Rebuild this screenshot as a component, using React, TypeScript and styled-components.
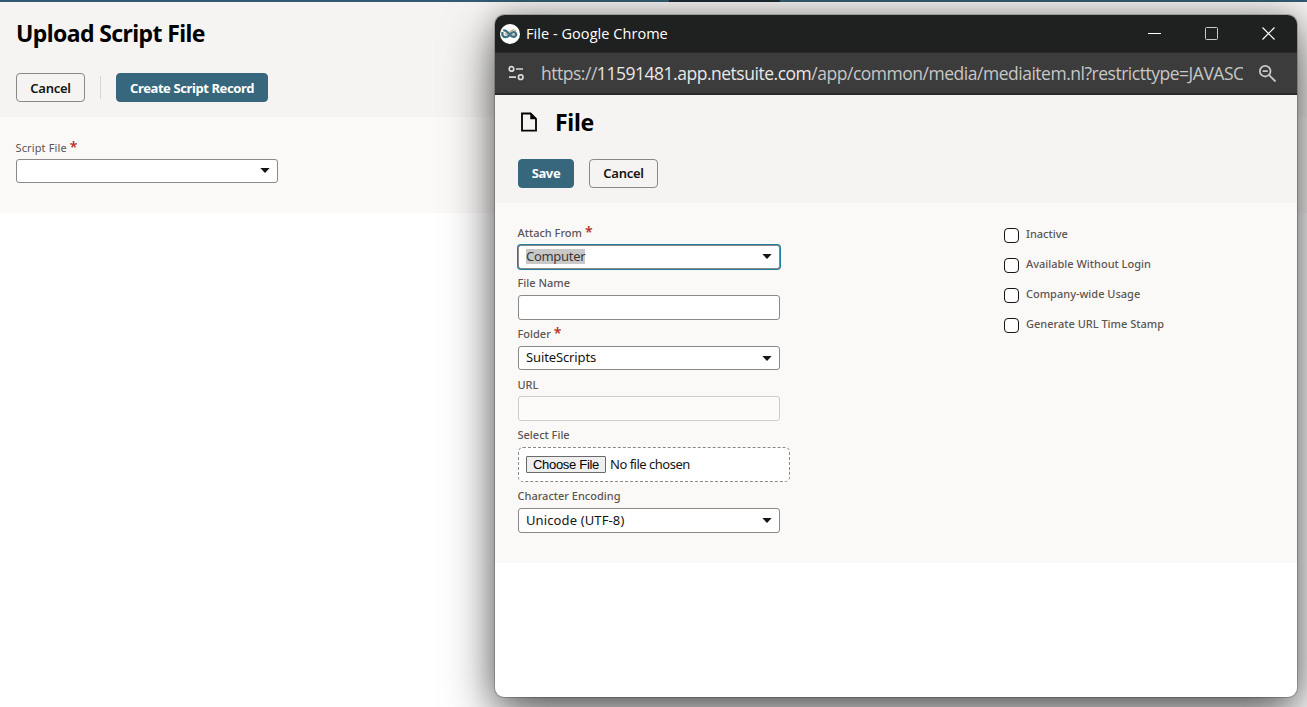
import React from "react";
import styled, { createGlobalStyle, css } from "styled-components";

const GlobalStyle = createGlobalStyle`
  *, *::before, *::after { box-sizing: border-box; }
  html, body { margin: 0; height: 100%; overflow: hidden; background: #fff; }
  body { font-family: "Noto Sans", "Open Sans", sans-serif; color: #161513; }
`;

const Page = styled.div`
  position: relative;
  height: 707px;
  overflow: hidden;
`;

const TopStrip = styled.div`
  height: 2px;
  padding-left: 669px;
  background: #325c72;
`;

const ActiveTab = styled.div`
  width: 111px;
  height: 2px;
  background: #1c2b33;
`;

const PageHeader = styled.header`
  height: 115px;
  padding: 14px 16px 0;
  background: #f5f4f2;
`;

const PageTitle = styled.h1<{ $spacing: number }>`
  margin: 0;
  font-size: 23px;
  line-height: 34px;
  font-weight: 700;
  color: #000;
  white-space: nowrap;
  letter-spacing: ${(p) => p.$spacing}px;
`;

const ButtonRow = styled.div<{ $top: number }>`
  display: flex;
  align-items: center;
  gap: 15px;
  margin-top: ${(p) => p.$top}px;
`;

const Button = styled.button<{ $width: number; $primary?: boolean; $lineHeight?: number }>`
  width: ${(p) => p.$width}px;
  height: 29px;
  padding: 0;
  border: 1px solid #8b8886;
  border-radius: 4px;
  background: transparent;
  color: #161513;
  font: 600 13px "Noto Sans", sans-serif;
  line-height: ${(p) => p.$lineHeight ?? 27}px;
  letter-spacing: -0.25px;
  white-space: nowrap;
  ${(p) =>
    p.$primary &&
    css`
      border-color: #36677d;
      background: #36677d;
      color: #fff;
      font-weight: 700;
      letter-spacing: -0.4px;
    `}
`;

const ButtonText = styled.span<{ $drop?: number }>`
  display: block;
  padding-top: ${(p) => p.$drop ?? 0}px;
`;

const Divider = styled.span`
  width: 1px;
  height: 23px;
  background: #d8d6d3;
`;

const PageForm = styled.section`
  height: 96px;
  padding: 22px 16px 0;
  background: #fbf9f8;
`;

const Field = styled.div<{ $gap?: number }>`
  display: flex;
  flex-direction: column;
  margin-bottom: ${(p) => p.$gap ?? 0}px;
`;

const FieldLabel = styled.label<{ $height?: number; $line?: number; $spacing?: number; $medium?: boolean }>`
  display: flex;
  height: ${(p) => p.$height ?? 20}px;
  margin-left: -0.5px;
  font-size: 11px;
  line-height: ${(p) => p.$line ?? 18}px;
  font-weight: ${(p) => (p.$medium ? 500 : 400)};
  color: #5b5652;
  white-space: nowrap;
  letter-spacing: ${(p) => p.$spacing ?? 0}px;
`;

const Required = styled.span<{ $line?: number }>`
  margin-left: 3px;
  font-size: 14px;
  line-height: ${(p) => p.$line ?? 15}px;
  font-weight: 600;
  color: #b3311f;
`;

const InputBox = styled.div<{ $height?: number; $focused?: boolean; $disabled?: boolean; $raised?: boolean }>`
  display: flex;
  align-items: center;
  justify-content: space-between;
  width: 262px;
  height: ${(p) => p.$height ?? 24}px;
  padding: 0 7px ${(p) => (p.$raised ? 1 : 0)}px;
  border: 1px solid ${(p) => (p.$disabled ? "#cfcdcb" : "#8b8886")};
  border-radius: 3px;
  background: ${(p) => (p.$disabled ? "#fcfbfa" : "#fff")};
  box-shadow: ${(p) => (p.$focused ? "0 0 0 1px #227e9e" : "none")};
`;

const Value = styled.span<{ $selected?: boolean; $spacing?: number; $raise?: boolean }>`
  margin-bottom: ${(p) => (p.$raise ? 2 : 0)}px;
  font-size: 13px;
  line-height: 15px;
  color: ${(p) => (p.$selected ? "#3a3836" : "#161513")};
  background: ${(p) => (p.$selected ? "#c8c8c8" : "transparent")};
  letter-spacing: ${(p) => p.$spacing ?? 0}px;
  white-space: nowrap;
`;

const Caret = () => (
  <svg width="10" height="5" viewBox="0 0 10 5">
    <path d="M0.3 0h9.4L5 5z" fill="#161513" />
  </svg>
);

const BrowserWindow = styled.div`
  position: absolute;
  left: 495px;
  top: 15px;
  width: 802px;
  height: 682px;
  border-radius: 9px;
  background: #fff;
  box-shadow: 0 0 0 1px rgba(0, 0, 0, 0.2), 0 18px 50px rgba(0, 0, 0, 0.62), 0 0 24px rgba(0, 0, 0, 0.2);
`;

const WindowClip = styled.div`
  height: 100%;
  border-radius: 9px;
  overflow: hidden;
`;

const TitleBar = styled.div`
  display: flex;
  align-items: center;
  height: 38px;
  padding: 0 21px 0 5px;
  border-bottom: 1px solid #2b2b2b;
  background: #1f2120;
`;

const WindowTitle = styled.span`
  flex: 1;
  margin-left: 6px;
  font: 400 14.5px/20px "Open Sans", sans-serif;
  letter-spacing: 0.05px;
  color: #fff;
`;

const WindowControls = styled.div`
  display: flex;
  align-items: center;
  gap: 42px;
`;

const AddressBar = styled.div`
  display: flex;
  align-items: center;
  height: 42px;
  padding: 0 20px 0 12px;
  border-bottom: 2px solid #2a2a2a;
  background: #3c3c3c;
`;

const Address = styled.div`
  width: 702px;
  margin: 0 15px 0 16px;
  overflow: hidden;
  white-space: nowrap;
  font: 400 17.5px/26px "Open Sans", sans-serif;
  letter-spacing: -0.48px;
  color: #c7c7c7;
`;

const Host = styled.span`
  color: #e8e8e8;
`;

const FileHeader = styled.header`
  height: 108px;
  padding: 10px 23px 0;
  background: #f5f4f2;
`;

const TitleRow = styled.div`
  display: flex;
  align-items: center;
  gap: 18px;
  padding-left: 3px;
`;

const FileForm = styled.section`
  display: flex;
  justify-content: space-between;
  height: 360px;
  padding: 21px 132px 0 23px;
  background: #fbf9f8;
`;

const FieldColumn = styled.div`
  display: flex;
  flex-direction: column;
`;

const FilePicker = styled.div`
  display: flex;
  align-items: center;
  gap: 4px;
  width: 272px;
  height: 35px;
  padding: 0 7px;
  border: 1px dashed #8b8886;
  border-radius: 5px;
  background: #fff;
`;

const ChooseButton = styled.button`
  width: 80px;
  height: 17px;
  padding: 0;
  border: 1px solid #6b6b6b;
  border-radius: 1px;
  background: #efefef;
  color: #000;
  font: 400 13px/14px "Liberation Sans", Arial, sans-serif;
  letter-spacing: -0.3px;
  white-space: nowrap;
`;

const CheckList = styled.div`
  display: flex;
  flex-direction: column;
  gap: 15px;
  width: 161px;
  padding-top: 4px;
`;

const CheckRow = styled.label`
  display: flex;
  height: 15px;
  gap: 7px;
  font-size: 11px;
  line-height: 12px;
  font-weight: 500;
  color: #5b5652;
  white-space: nowrap;
`;

const Checkbox = styled.span`
  flex: none;
  width: 15px;
  height: 15px;
  border: 1px solid #161513;
  border-radius: 4px;
  background: #fff;
`;

const checks = ["Inactive", "Available Without Login", "Company-wide Usage", "Generate URL Time Stamp"];

const Logo = () => (
  <svg width="20" height="20" viewBox="0 0 20 20" fill="none">
    <circle cx="10" cy="10" r="10" fill="#fff" />
    <path
      d="M6.300 9.300C5 8.800 4.800 10.600 6.200 10.700c1.800 0 2.600-1.500 3.900-3 1.400-1.600 4.300-2.600 6-1"
      stroke="#c5b690"
      strokeWidth="1.300"
    />
    <path d="M12.300 10.300c.9 1 2.600.9 2.700-.3" stroke="#c5b690" strokeWidth="1.500" />
    <path
      d="M2.600 8C1.600 11.500 3.600 13.300 5.900 13.200c3.500-.1 4.200-4.700 7.600-5 2.600-.2 3.600 2.900 1.600 4.200-2.300 1.300-4.800-.7-6.500-2.900C7.100 7.600 5.200 5.500 3.200 6.800"
      stroke="#3d7087"
      strokeWidth="2.300"
    />
  </svg>
);

const SiteInfoIcon = () => (
  <svg width="18" height="16" viewBox="0 0 18 16" fill="none" stroke="#d8d8d8" strokeWidth="1.700">
    <circle cx="4.500" cy="3.900" r="2.300" />
    <path d="M9 4h7M2 12.200h7" />
    <circle cx="13.700" cy="12.200" r="2.300" />
  </svg>
);

const ZoomOutIcon = () => (
  <svg width="19" height="19" viewBox="0 0 19 19" fill="none" stroke="#c7c7c7" strokeWidth="1.800">
    <circle cx="7.200" cy="7.200" r="5.300" />
    <path d="M11.200 11.200l6.300 6.300M4.600 7.200h5.200" />
  </svg>
);

const DocumentIcon = () => (
  <svg width="16" height="20" viewBox="0 0 16 20" fill="none" stroke="#000" strokeWidth="1.800">
    <path d="M1 1.500h8.600L15 6.900v11.700H1z" />
    <path d="M9.600 1.500v5.400H15z" fill="#000" strokeWidth="0.600" />
  </svg>
);

export default function App() {
  return (
    <Page>
      <GlobalStyle />
      <TopStrip>
        <ActiveTab />
      </TopStrip>
      <PageHeader>
        <PageTitle $spacing={-0.6}>Upload Script File</PageTitle>
        <ButtonRow $top={23}>
          <Button $width={69}>
            <ButtonText $drop={1}>Cancel</ButtonText>
          </Button>
          <Divider />
          <Button $width={152} $primary>
            <ButtonText $drop={1}>Create Script Record</ButtonText>
          </Button>
        </ButtonRow>
      </PageHeader>
      <PageForm>
        <Field>
          <FieldLabel $spacing={0.12}>
            Script File <Required>*</Required>
          </FieldLabel>
          <InputBox $raised>
            <Value />
            <Caret />
          </InputBox>
        </Field>
      </PageForm>

      <BrowserWindow>
        <WindowClip>
          <TitleBar>
            <Logo />
            <WindowTitle>File - Google Chrome</WindowTitle>
            <WindowControls>
              <svg width="15" height="15" viewBox="0 0 15 15">
                <path d="M1 7.500h13" stroke="#fff" />
              </svg>
              <svg width="15" height="15" viewBox="0 0 15 15">
                <rect x="1.500" y="1.500" width="12" height="12" rx="1" fill="none" stroke="#c9c9c9" />
              </svg>
              <svg width="15" height="15" viewBox="0 0 15 15">
                <path d="M1.500 1.500l12 12M13.500 1.500l-12 12" stroke="#fff" strokeWidth="1.200" />
              </svg>
            </WindowControls>
          </TitleBar>
          <AddressBar>
            <SiteInfoIcon />
            <Address>
              https://<Host>11591481.app.netsuite.com</Host>/app/common/media/mediaitem.nl?restricttype=JAVASCRIPT
            </Address>
            <ZoomOutIcon />
          </AddressBar>
          <FileHeader>
            <TitleRow>
              <DocumentIcon />
              <PageTitle $spacing={-0.3}>File</PageTitle>
            </TitleRow>
            <ButtonRow $top={20}>
              <Button $width={56} $primary>
                <ButtonText>Save</ButtonText>
              </Button>
              <Button $width={69}>
                <ButtonText>Cancel</ButtonText>
              </Button>
            </ButtonRow>
          </FileHeader>
          <FileForm>
            <FieldColumn>
              <Field $gap={4}>
                <FieldLabel $height={21} $medium>
                  Attach From <Required>*</Required>
                </FieldLabel>
                <InputBox $focused $raised>
                  <Value $selected $spacing={-0.3}>
                    Computer
                  </Value>
                  <Caret />
                </InputBox>
              </Field>
              <Field $gap={4}>
                <FieldLabel $height={22} $line={20} $medium>
                  File Name
                </FieldLabel>
                <InputBox $height={25} />
              </Field>
              <Field $gap={5}>
                <FieldLabel $height={22} $line={20} $medium>
                  Folder <Required $line={17}>*</Required>
                </FieldLabel>
                <InputBox>
                  <Value $raise $spacing={-0.12}>
                    SuiteScripts
                  </Value>
                  <Caret />
                </InputBox>
              </Field>
              <Field $gap={4}>
                <FieldLabel $height={21} $line={20} $medium>
                  URL
                </FieldLabel>
                <InputBox $height={25} $disabled />
              </Field>
              <Field $gap={4}>
                <FieldLabel $height={22} $line={20} $medium>
                  Select File
                </FieldLabel>
                <FilePicker>
                  <ChooseButton>Choose File</ChooseButton>
                  <Value $spacing={-0.5}>No file chosen</Value>
                </FilePicker>
              </Field>
              <Field>
                <FieldLabel $height={22} $line={20} $medium>
                  Character Encoding
                </FieldLabel>
                <InputBox $height={25}>
                  <Value $spacing={0.12}>Unicode (UTF-8)</Value>
                  <Caret />
                </InputBox>
              </Field>
            </FieldColumn>
            <CheckList>
              {checks.map((label) => (
                <CheckRow key={label}>
                  <Checkbox />
                  {label}
                </CheckRow>
              ))}
            </CheckList>
          </FileForm>
        </WindowClip>
      </BrowserWindow>
    </Page>
  );
}
